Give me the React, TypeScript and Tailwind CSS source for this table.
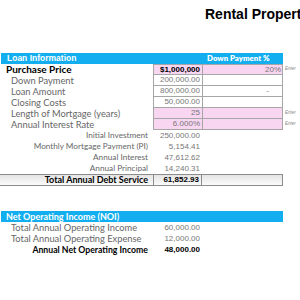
import React from "react"

const cal = "[font-family:Lato,sans-serif]"

type RowProps = {
  label: string
  labelClass?: string
  value?: string
  valueClass?: string
  dp?: string
  dpClass?: string
  cellBg?: string
  boxed?: boolean
  first?: boolean
  enter?: boolean
}

function Row({ label, labelClass = "", value = "", valueClass = "", dp = "", dpClass = "", cellBg = "", boxed, first, enter }: RowProps) {
  const b = boxed ? `border-l border-b border-[#a6a6a6] ${first ? "border-t" : ""}` : ""
  return (
    <div className="flex h-[11px] items-center">
      <div className={`w-[152px] h-full flex items-center whitespace-nowrap ${cal} ${labelClass}`}>{label}</div>
      <div className={`w-[49px] h-full flex items-center justify-end pr-[2px] text-[8px] ${b} ${cellBg} ${valueClass}`}>
        {value}
      </div>
      <div
        className={`w-[81px] h-full flex items-center justify-end text-[8px] text-[#777] ${b} ${boxed ? "border-r" : ""} ${cellBg} ${dpClass}`}
      >
        {dp}
      </div>
      {enter && <span className="ml-[2px] text-[4.5px] italic text-[#888]">Enter</span>}
    </div>
  )
}

export default function App() {
  const gray = "text-[9.3px] text-[#666] pl-[10px]"
  const right = "text-[8.2px] text-[#666] justify-end pr-[5px]"
  const pink = "bg-[#f8d5f1]"
  const muted = "text-[#777]"
  return (
    <div className="w-[300px] h-[300px] bg-white overflow-hidden [font-family:'Liberation_Sans',Arial,sans-serif]">
      <div className="h-[53px] pt-[4px] pl-[205px] whitespace-nowrap text-[14px] font-bold text-black">
        Rental Property Calculator
      </div>

      <div className="pl-[1px]">
        {/* Loan information */}
        <div className="w-[282px] h-[11px] bg-[#12aeef] flex items-center text-white font-bold whitespace-nowrap">
          <span className="w-[201px] pl-[6px] text-[8.5px]">Loan Information</span>
          <span className={`pl-[5px] text-[7.8px] font-extrabold ${cal}`}>Down Payment %</span>
        </div>

        <Row
          label="Purchase Price"
          labelClass="text-[10px] font-bold text-black pl-[5px]"
          value="$1,000,000"
          valueClass="font-bold text-black"
          dp="20%"
          dpClass="text-[8.5px] pr-[1px]"
          cellBg={pink}
          boxed
          first
          enter
        />
        <Row label="Down Payment" labelClass={gray} value="200,000.00" valueClass={muted} boxed />
        <Row label="Loan Amount" labelClass={gray} value="800,000.00" valueClass={muted} dp="-" dpClass="pr-[13px]" boxed />
        <Row label="Closing Costs" labelClass={gray} value="50,000.00" valueClass={muted} boxed />
        <Row label="Length of Mortgage (years)" labelClass={gray} value="25" valueClass={muted} cellBg={pink} boxed enter />
        <Row label="Annual Interest Rate" labelClass={gray} value="6.000%" valueClass={muted} cellBg={pink} boxed enter />
        <Row label="Initial Investment" labelClass={right} value="250,000.00" valueClass={muted} />
        <Row label="Monthly Mortgage Payment (PI)" labelClass={right} value="5,154.41" valueClass={muted} />
        <Row label="Annual Interest" labelClass={right} value="47,612.62" valueClass={muted} />
        <Row label="Annual Principal" labelClass={right} value="14,240.31" valueClass={muted} />

        <div className="flex h-[12px] w-[283px] -ml-[1px] border-y border-[#8c8c8c] bg-gradient-to-b from-[#e4e4e4] to-[#fbfbfb]">
          <div
            className={`w-[153px] h-full flex items-center justify-end pr-[5px] text-[9px] font-bold text-black whitespace-nowrap ${cal}`}
          >
            Total Annual Debt Service
          </div>
          <div className="w-[49px] h-full flex items-center justify-end pr-[2px] text-[8px] font-bold text-black border-x border-[#8c8c8c]">
            61,852.93
          </div>
          <div className="w-[81px] h-full border-r border-[#8c8c8c]" />
        </div>

        <div className="h-[25px]" />

        {/* NOI */}
        <div className={`w-[282px] h-[11px] bg-[#12aeef] flex items-center text-white font-bold text-[9px] pl-[5px] ${cal}`}>
          Net Operating Income (NOI)
        </div>
        <Row label="Total Annual Operating Income" labelClass={gray} value="60,000.00" valueClass={muted} />
        <Row label="Total Annual Operating Expense" labelClass={gray} value="12,000.00" valueClass={muted} />
        <Row
          label="Annual Net Operating Income"
          labelClass="text-[8.7px] font-bold text-black justify-end pr-[5px]"
          value="48,000.00"
          valueClass="font-bold text-black"
        />
      </div>
    </div>
  )
}
